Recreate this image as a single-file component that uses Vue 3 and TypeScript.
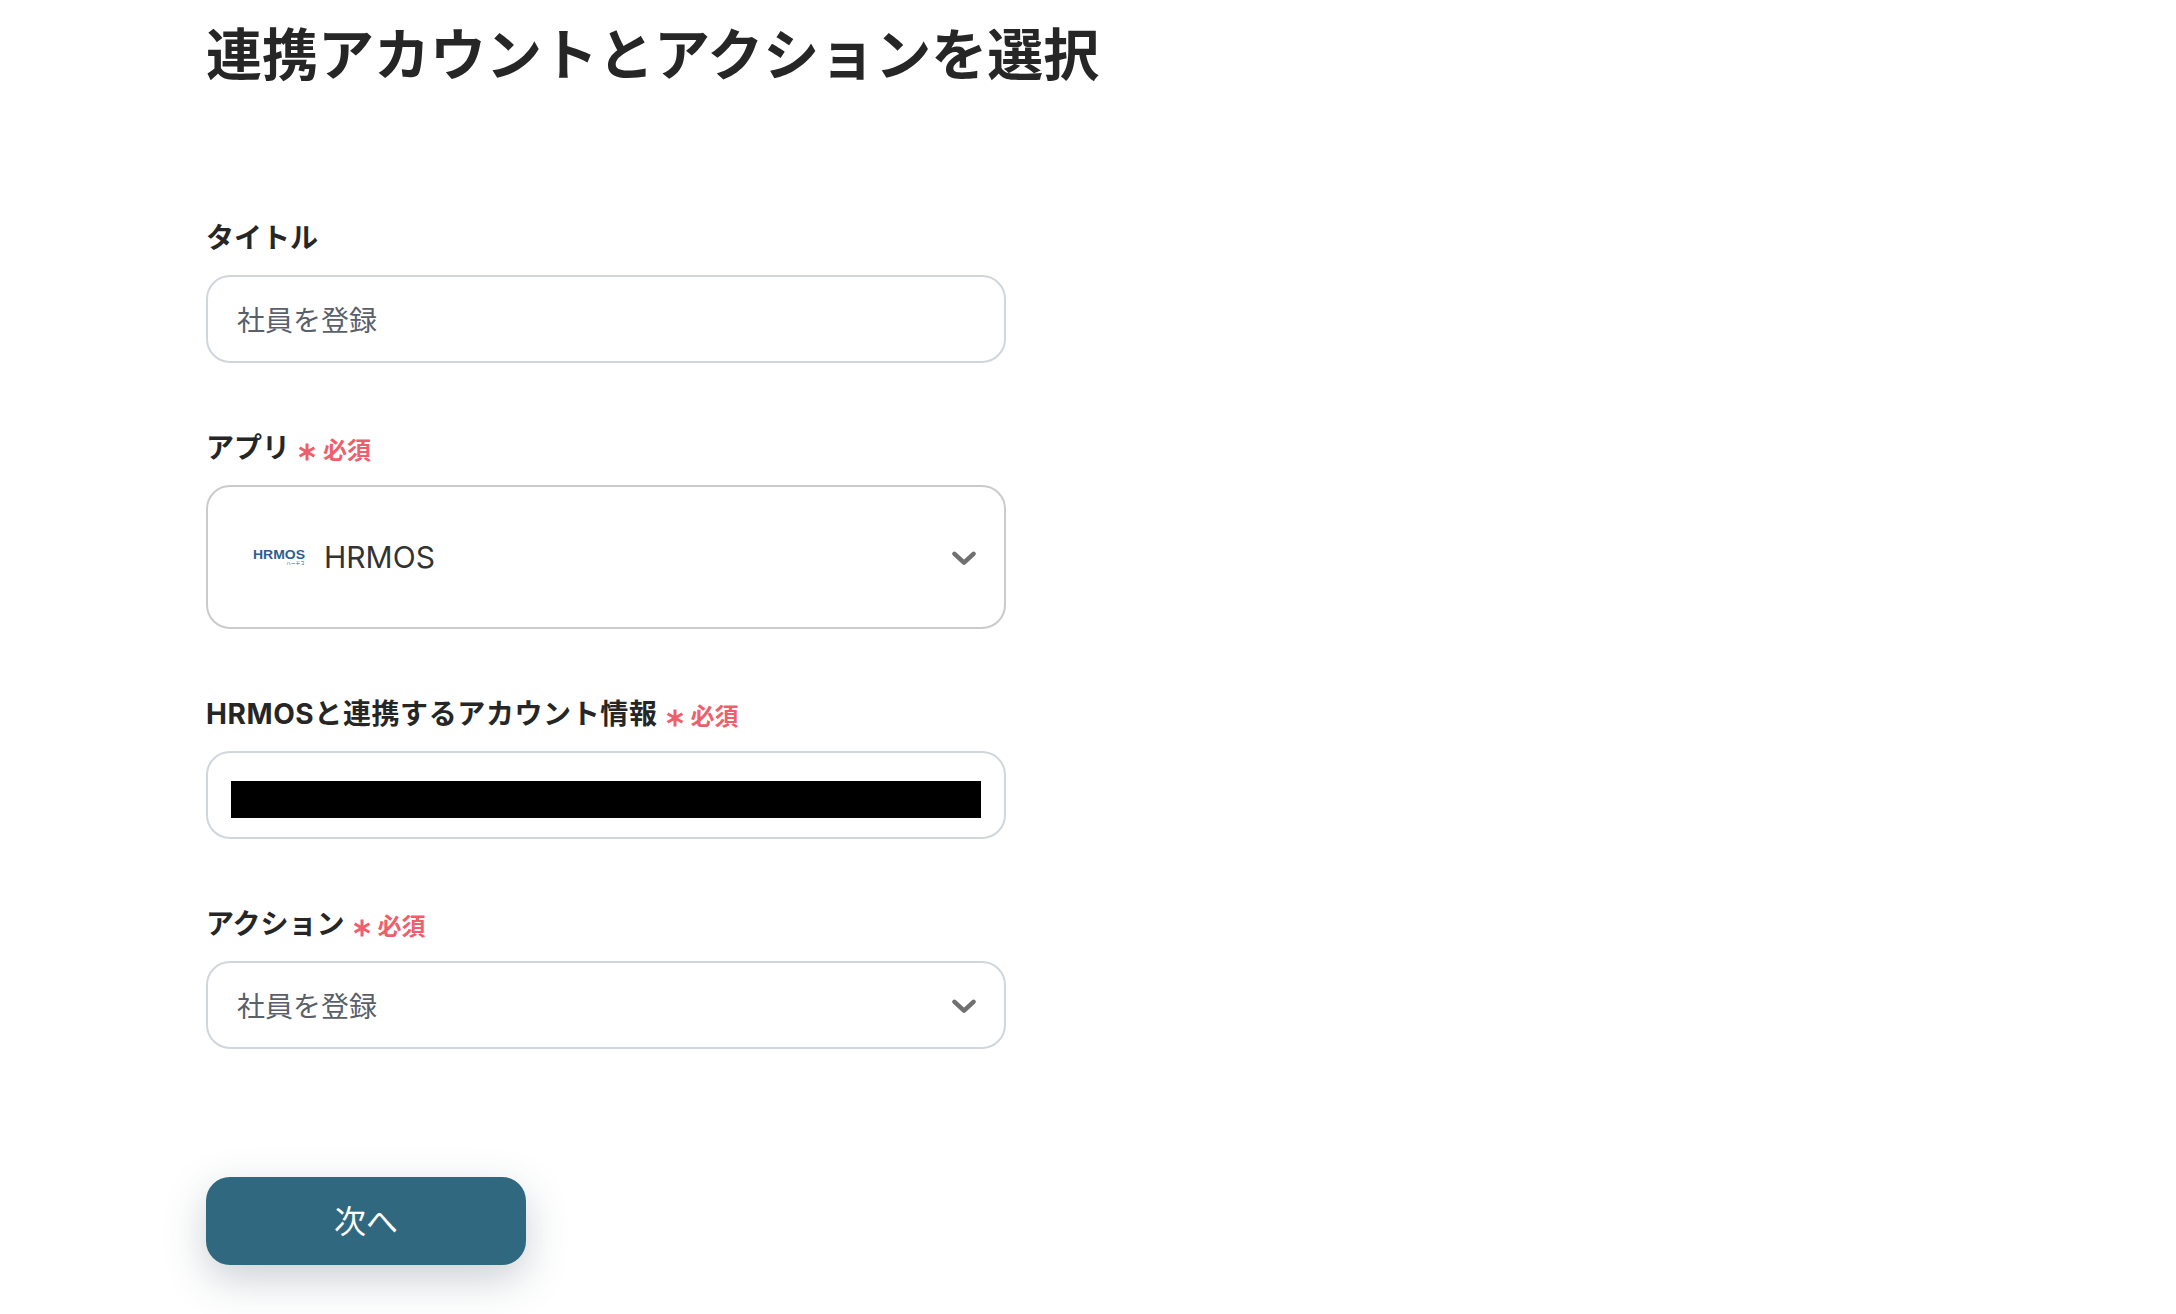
<script setup lang="ts">
interface Field {
  label: string
  required: boolean
  kind: 'text' | 'app' | 'masked' | 'select'
  value?: string
}
const fields: Field[] = [
  { label: 'タイトル', required: false, kind: 'text', value: '社員を登録' },
  { label: 'アプリ', required: true, kind: 'app', value: 'HRMOS' },
  { label: 'HRMOSと連携するアカウント情報', required: true, kind: 'masked' },
  { label: 'アクション', required: true, kind: 'select', value: '社員を登録' },
]
</script>

<template>
  <main class="page">
    <h1 class="title">連携アカウントとアクションを選択</h1>
    <form class="form" @submit.prevent>
      <div v-for="f in fields" :key="f.label" class="field">
        <div class="label-row">
          <span class="label" :class="{ wide: f.kind === 'masked' }">{{ f.label }}</span>
          <span v-if="f.required" class="req">
            <svg class="star" viewBox="0 0 20 20" aria-hidden="true">
              <path d="M10 1.5v17M2.6 5.7l14.8 8.6M17.4 5.7 2.6 14.3" />
            </svg>
            <span>必須</span>
          </span>
        </div>
        <div class="box" :class="f.kind">
          <template v-if="f.kind === 'app'">
            <svg class="logo" viewBox="0 0 52 16" aria-hidden="false">
              <text x="0" y="9.5" textLength="52" lengthAdjust="spacingAndGlyphs" class="logo-main">HRMOS</text>
              <text x="33" y="15.5" textLength="19" lengthAdjust="spacingAndGlyphs" class="logo-sub">ハーモス</text>
            </svg>
            <span class="app-name">{{ f.value }}</span>
          </template>
          <div v-else-if="f.kind === 'masked'" class="mask"></div>
          <span v-else class="value">{{ f.value }}</span>
          <svg v-if="f.kind === 'app' || f.kind === 'select'" class="chev" viewBox="0 0 24 15" aria-hidden="true">
            <path d="M2.5 2.8 12 11.6l9.5-8.8" />
          </svg>
        </div>
      </div>
      <button class="next" type="button">次へ</button>
    </form>
  </main>
</template>

<style scoped>
.page {
  box-sizing: border-box;
  height: 1314px;
  overflow: hidden;
  padding: 11px 0 0 206px;
  background: #fff;
  color: #262626;
  font-family: "Noto Sans CJK JP", "Noto Sans", sans-serif;
}
.title {
  margin: 0;
  font-size: 56px;
  line-height: 80px;
  font-weight: 700;
  color: #262626;
}
.form {
  display: flex;
  flex-direction: column;
  gap: 65px;
  width: 800px;
  margin-top: 127px;
}
.field {
  display: flex;
  flex-direction: column;
  gap: 17px;
}
.label-row {
  display: flex;
  align-items: center;
  height: 40px;
  gap: 7px;
}
.label {
  font-family: "Inter", "Noto Sans CJK JP", sans-serif;
  font-size: 28px;
  font-weight: 700;
  line-height: 40px;
}
.label.wide {
  letter-spacing: 0.6px;
}
.req {
  display: flex;
  align-items: center;
  gap: 6px;
  color: #ef5f6b;
  font-size: 24px;
  font-weight: 700;
  line-height: 40px;
  position: relative;
  top: 1px;
}
.star {
  width: 20px;
  height: 20px;
  position: relative;
  top: 3px;
}
.star path {
  fill: none;
  stroke: #ef5f6b;
  stroke-width: 3;
}
.box {
  box-sizing: border-box;
  display: flex;
  align-items: center;
  height: 88px;
  padding: 0 29px;
  border: 2.5px solid #d0d6dc;
  border-radius: 24px;
  background: #fff;
}
.box.app {
  height: 144px;
  border-color: #cbcbcb;
  padding-left: 45px;
}
.box.masked {
  padding: 0 23px;
}
.value {
  font-size: 28px;
  line-height: 40px;
  color: #59606a;
}
.logo {
  width: 52px;
  height: 16px;
  flex: none;
}
.logo-main {
  font-family: "Liberation Sans", sans-serif;
  font-size: 12.5px;
  font-weight: 700;
  fill: #2c5e93;
}
.logo-sub {
  font-family: "Noto Sans CJK JP", sans-serif;
  font-size: 5px;
  fill: #2c5e93;
}
.app-name {
  margin-left: 19px;
  font-family: "Inter", "Liberation Sans", sans-serif;
  font-size: 30px;
  color: #333;
}
.mask {
  width: 100%;
  height: 37px;
  margin-top: 9px;
  background: #000;
}
.chev {
  width: 24px;
  height: 15px;
  margin-left: auto;
  margin-right: -1px;
  margin-top: 2px;
  flex: none;
}
.chev path {
  fill: none;
  stroke: #707070;
  stroke-width: 4.5;
  stroke-linecap: round;
  stroke-linejoin: round;
}
.next {
  align-self: flex-start;
  width: 320px;
  height: 88px;
  margin-top: 63px;
  padding: 0 0 5px;
  border: 0;
  border-radius: 24px;
  background: #306880;
  color: #fff;
  font-family: "Noto Sans CJK JP", sans-serif;
  font-size: 32px;
  box-shadow: 0 14px 40px rgba(48, 70, 85, 0.25);
}
</style>

<style>
html, body { margin: 0; background: #fff; }
</style>
